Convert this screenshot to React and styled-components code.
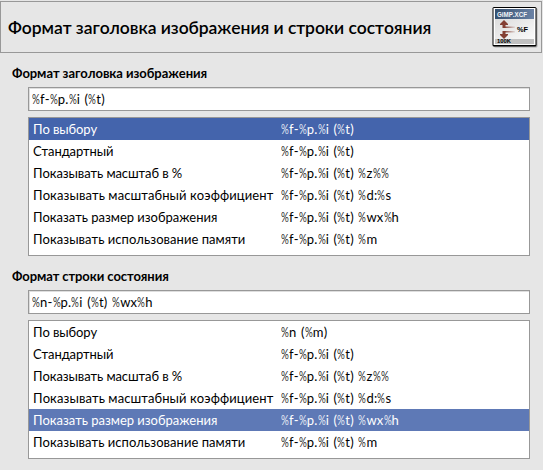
import React from "react";
import styled, { createGlobalStyle } from "styled-components";

const GlobalStyle = createGlobalStyle`
  * { box-sizing: border-box; }
  body {
    margin: 0;
    background: #e6e6e6;
    color: #000;
    font: 13px/22px Lato, "Noto Sans", sans-serif;
    font-kerning: none;
  }
`;

const Page = styled.main`
  width: 543px;
  height: 470px;
  padding-top: 1px;
  overflow: hidden;
`;

const Header = styled.header`
  display: flex;
  align-items: center;
  justify-content: space-between;
  width: 542px;
  height: 52px;
  padding: 0 3px 1px 7px;
  border: 1px solid #989898;
`;

const Title = styled.h1`
  margin: 0;
  padding-top: 2px;
  font-size: 17.5px;
  font-weight: 600;
  line-height: 24px;
  letter-spacing: ${(p) => p.$spacing}px;
  white-space: nowrap;
`;

const HeaderIcon = styled.svg`
  flex: none;
  width: 46px;
  height: 42px;
`;

const Section = styled.section`
  height: 203px;
  padding: 10px 13px 0 12px;
`;

const SectionTitle = styled.h2`
  margin: 0;
  height: 24px;
  font-size: 13px;
  font-weight: 700;
  line-height: 20px;
  letter-spacing: ${(p) => p.$spacing}px;
  white-space: nowrap;
`;

const Fields = styled.div`
  display: flex;
  flex-direction: column;
  gap: 6px;
  padding-left: 16px;
`;

const Entry = styled.div`
  height: 24px;
  padding: 1px 3px;
  background: #fff;
  border: 1px solid #989898;
  box-shadow: inset 0 1px 0 #dedede, inset 1px 0 0 #dedede;
  line-height: 21px;
`;

const List = styled.div`
  height: 139px;
  background: #fff;
  border: 1px solid #989898;
`;

const Row = styled.div`
  display: grid;
  grid-template-columns: 248px 1fr;
  height: 22px;
  padding-left: 4px;
  line-height: 23px;
  color: ${(p) => (p.$selected ? "#fff" : "#000")};
  background: ${(p) => p.$selected || "transparent"};
`;

const Name = styled.span`
  letter-spacing: ${(p) => p.$spacing}px;
  white-space: nowrap;
`;

const Code = styled.span`
  letter-spacing: 0.22px;
  word-spacing: 1px;
  white-space: nowrap;
`;

const Percent = styled.span`
  display: inline-block;
  width: 8px;
  letter-spacing: 0;
  transform: scaleX(0.75);
  transform-origin: left;
  opacity: 0.85;
`;

const names = [
  ["По выбору", -0.12],
  ["Стандартный", -0.1],
  ["Показывать масштаб в %", -0.09],
  ["Показывать масштабный коэффициент", 0.09],
  ["Показать размер изображения", -0.03],
  ["Показывать использование памяти", 0.04],
];

const titleCodes = [
  "%f-%p.%i (%t)",
  "%f-%p.%i (%t)",
  "%f-%p.%i (%t) %z%%",
  "%f-%p.%i (%t) %d:%s",
  "%f-%p.%i (%t) %wx%h",
  "%f-%p.%i (%t) %m",
];

const statusCodes = ["%n (%m)", ...titleCodes.slice(1)];

function FormatCode({ value }) {
  return (
    <Code>
      {[...value].map((ch, i) => (ch === "%" ? <Percent key={i}>%</Percent> : ch))}
    </Code>
  );
}

function FormatSection({ title, spacing, value, codes, selected, color }) {
  return (
    <Section>
      <SectionTitle $spacing={spacing}>{title}</SectionTitle>
      <Fields>
        <Entry>
          <FormatCode value={value} />
        </Entry>
        <List>
          {names.map(([name, nameSpacing], i) => (
            <Row key={name} $selected={i === selected ? color : undefined}>
              <Name $spacing={nameSpacing}>{name}</Name>
              <FormatCode value={codes[i]} />
            </Row>
          ))}
        </List>
      </Fields>
    </Section>
  );
}

const IconText = styled.text`
  font-family: "Liberation Sans", sans-serif;
  font-weight: 700;
  font-size: ${(p) => p.$size}px;
`;

function ImageTitleIcon() {
  return (
    <HeaderIcon viewBox="0 0 46 42">
      <defs>
        <linearGradient id="bar" x1="0" x2="1">
          <stop offset="0" stopColor="#35506f" />
          <stop offset="1" stopColor="#6b82a5" />
        </linearGradient>
        <linearGradient id="paper" x1="0" y1="0" x2="1" y2="1">
          <stop offset="0" stopColor="#dcdcdc" />
          <stop offset="1" stopColor="#fafafa" />
        </linearGradient>
        <linearGradient id="stem" gradientUnits="userSpaceOnUse" x1="12" x2="23" y1="0" y2="0">
          <stop offset="0" stopColor="#843f33" />
          <stop offset="1" stopColor="#843f33" stopOpacity="0.1" />
        </linearGradient>
      </defs>
      <rect x="2" y="2" width="43.5" height="39.5" rx="1.5" fill="#aaa" />
      <rect x="0.5" y="1" width="44" height="39.5" rx="1.5" fill="#000" />
      <rect x="1.5" y="2" width="42" height="37" fill="#fff" />
      <rect x="3" y="3" width="39" height="10" fill="url(#bar)" />
      <rect x="3" y="13" width="39" height="20" fill="url(#paper)" />
      <rect x="3" y="33" width="39" height="5" fill="#c0c0c0" />
      <IconText $size={7.5} x="5" y="11" textLength="30" lengthAdjust="spacingAndGlyphs" fill="#f2f6fa">GiMP.XCF</IconText>
      <path d="M12 14L16 18V19H13.5V22H10.5V19H8V18ZM12 33L8 29V28H10.5V25H13.5V28H16V29Z" fill="#843f33" />
      <path d="M12 20.5H23V22H12ZM12 25H23V26.5H12Z" fill="url(#stem)" />
      <IconText $size={6.5} x="25" y="25.8" textLength="11" lengthAdjust="spacingAndGlyphs">%F</IconText>
      <IconText $size={5} x="5" y="37.3" textLength="14" lengthAdjust="spacingAndGlyphs">100K</IconText>
    </HeaderIcon>
  );
}

export default function App() {
  return (
    <>
      <GlobalStyle />
      <Page>
        <Header>
          <Title $spacing={-0.06}>Формат заголовка изображения и строки состояния</Title>
          <ImageTitleIcon />
        </Header>
        <FormatSection
          title="Формат заголовка изображения"
          spacing={-0.06}
          value="%f-%p.%i (%t)"
          codes={titleCodes}
          selected={0}
          color="#4464ac"
        />
        <FormatSection
          title="Формат строки состояния"
          spacing={-0.1}
          value="%n-%p.%i (%t) %wx%h"
          codes={statusCodes}
          selected={4}
          color="#5e79b6"
        />
      </Page>
    </>
  );
}
